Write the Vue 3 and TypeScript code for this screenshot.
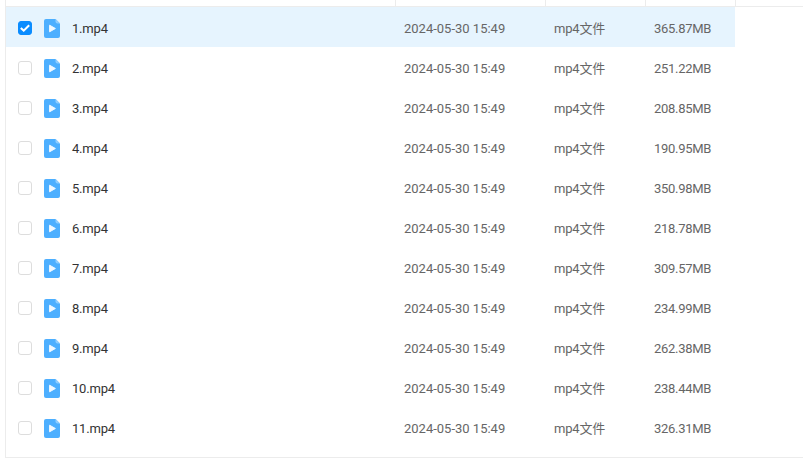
<script setup lang="ts">
interface FileRow {
  name: string;
  size: string;
}

const files: FileRow[] = [
  { name: "1.mp4", size: "365.87MB" },
  { name: "2.mp4", size: "251.22MB" },
  { name: "3.mp4", size: "208.85MB" },
  { name: "4.mp4", size: "190.95MB" },
  { name: "5.mp4", size: "350.98MB" },
  { name: "6.mp4", size: "218.78MB" },
  { name: "7.mp4", size: "309.57MB" },
  { name: "8.mp4", size: "234.99MB" },
  { name: "9.mp4", size: "262.38MB" },
  { name: "10.mp4", size: "238.44MB" },
  { name: "11.mp4", size: "326.31MB" },
];
</script>

<template>
  <div class="frame">
    <div class="head">
      <span class="headCell nameCol"></span>
      <span class="headCell timeCol"></span>
      <span class="headCell typeCol"></span>
      <span class="headCell sizeCol"></span>
    </div>
    <div
      v-for="(file, i) in files"
      :key="file.name"
      class="row"
      :class="{ selected: i === 0 }"
    >
      <div class="nameCol nameCell">
        <span class="check">
          <svg v-if="i === 0" width="10" height="8" viewBox="0 0 10 8">
            <path d="M0.8 4l2.9 2.6L9.2 1.2" fill="none" stroke="#fff" stroke-width="2" />
          </svg>
        </span>
        <svg class="fileIcon" width="16" height="19" viewBox="0 0 16 19">
          <path
            d="M2 0h9.5L16 4.5V17a2 2 0 0 1-2 2H2a2 2 0 0 1-2-2V2a2 2 0 0 1 2-2z"
            fill="#4dafff"
          />
          <path d="M11.5 0L16 4.5h-2.5a2 2 0 0 1-2-2z" fill="#8fcdff" />
          <path
            d="M5.6 6.2l5.8 3.3-5.8 3.3z"
            fill="#f2f9ff"
            stroke="#f2f9ff"
            stroke-width="1"
            stroke-linejoin="round"
          />
        </svg>
        <span class="fileName">{{ file.name }}</span>
      </div>
      <div class="timeCol cell">2024-05-30 15:49</div>
      <div class="typeCol cell">mp4文件</div>
      <div class="sizeCol cell">{{ file.size }}</div>
    </div>
  </div>
</template>

<style scoped>
.frame {
  width: 798px;
  height: 458px;
  margin-left: 5px;
  box-sizing: border-box;
  border-left: 1px solid #ececec;
  border-bottom: 1px solid #ececec;
  font-family: Roboto, "Noto Sans CJK SC", sans-serif;
  font-size: 13px;
  line-height: 20px;
  background: #fff;
}

.head {
  display: flex;
  height: 7px;
  box-sizing: border-box;
  border-bottom: 1px solid #ececec;
}

.headCell {
  border-right: 1px solid #ececec;
  box-sizing: border-box;
}

.row {
  display: flex;
  align-items: center;
  height: 40px;
  width: 729px;
  padding-top: 2px;
  box-sizing: border-box;
}

.selected {
  background: #e6f4fe;
}

.nameCol {
  width: 390px;
  flex: none;
}

.timeCol {
  width: 150px;
  flex: none;
}

.typeCol {
  width: 100px;
  flex: none;
  letter-spacing: -0.2px;
}

.sizeCol {
  width: 90px;
  flex: none;
  letter-spacing: -0.3px;
}

.nameCell {
  display: flex;
  align-items: center;
  padding-left: 12px;
  box-sizing: border-box;
  color: #333;
}

.check {
  display: flex;
  align-items: center;
  justify-content: center;
  width: 12px;
  height: 12px;
  border: 1px solid #ddd;
  border-radius: 3px;
  background: #fff;
}

.selected .check {
  border-color: #0a8cff;
  background: #0a8cff;
}

.fileIcon {
  margin-left: 12px;
  flex: none;
}

.fileName {
  margin-left: 12px;
  padding-top: 2px;
  letter-spacing: -0.2px;
}

.cell {
  padding: 2px 0 0 8px;
  box-sizing: border-box;
  color: #666;
}
</style>

<style>
html,
body {
  margin: 0;
  background: #fff;
  overflow: hidden;
}
</style>
